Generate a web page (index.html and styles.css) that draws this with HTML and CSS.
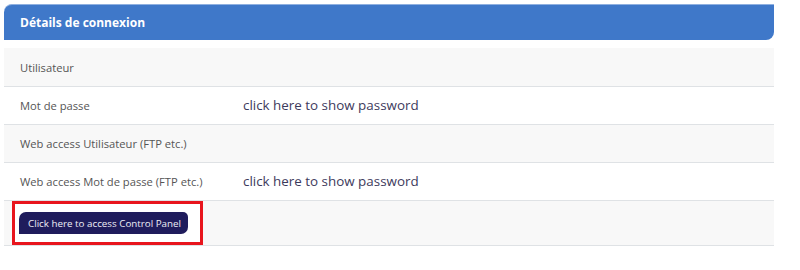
FILE: index.html
```html
<!DOCTYPE html>
<html lang="fr">
<head>
  <meta charset="UTF-8">
  <title>Détails de connexion</title>
  <link rel="stylesheet" href="styles.css">
</head>
<body>

  <!-- Panel -->
  <div class="panel">
    <div class="panel-head">Détails de connexion</div>

    <div class="details">
      <div class="row odd">
        <div class="label">Utilisateur</div>
        <div class="value"></div>
      </div>
      <div class="row">
        <div class="label">Mot de passe</div>
        <div class="value"><a href="#" class="reveal">click here to show password</a></div>
      </div>
      <div class="row odd">
        <div class="label">Web access Utilisateur (FTP etc.)</div>
        <div class="value"></div>
      </div>
      <div class="row">
        <div class="label">Web access Mot de passe (FTP etc.)</div>
        <div class="value"><a href="#" class="reveal">click here to show password</a></div>
      </div>
      <div class="row odd last">
        <div class="highlight">
          <a href="#" class="btn-panel">Click here to access Control Panel</a>
        </div>
      </div>
    </div>
  </div>

</body>
</html>
```

FILE: styles.css
```css
body {
  margin: 0;
  padding: 4px;
  font-family: 'Open Sans', sans-serif;
  background-color: #fff;
  color: #555;
}
.panel {
  width: 770px;
}
.panel-head {
  height: 36px;
  display: flex;
  align-items: center;
  padding-left: 16px;
  background-color: #3f78c9;
  border-top: 1px solid #8fb0e0;
  box-sizing: border-box;
  border-radius: 8px 0 8px 0;
  color: white;
  font-weight: bold;
  font-size: 12px;
}
.details {
  margin-top: 8px;
}
.row {
  display: grid;
  grid-template-columns: 239px 1fr;
  align-items: center;
  min-height: 37px;
  border-top: 1px solid #dfe2e5;
  background-color: #fff;
}
.row:first-child {
  border-top: none;
  min-height: 38px;
}
.row.odd {
  background-color: #f8f8f8;
}
.row.last {
  display: flex;
  min-height: 44px;
  border-bottom: 1px solid #dfe2e5;
}
.label {
  padding-left: 16px;
  font-size: 11.2px;
  color: #555;
}
.value {
  padding-bottom: 3px;
}
.reveal {
  font-size: 13.4px;
  color: #3d3a5c;
  text-decoration: none;
}
.highlight {
  margin-left: 8px;
  height: 44px;
  box-sizing: border-box;
  border: 3px solid #e8151d;
  background-color: #fff;
  padding: 8px 12px 8px 4px;
}
.btn-panel {
  display: flex;
  align-items: center;
  width: 151px;
  height: 22px;
  padding: 0 9px;
  background-color: #1f1c5c;
  border-radius: 7px 5px 7px 0;
  color: #eeeef6;
  font-size: 9.8px;
  white-space: nowrap;
  text-decoration: none;
}
```
